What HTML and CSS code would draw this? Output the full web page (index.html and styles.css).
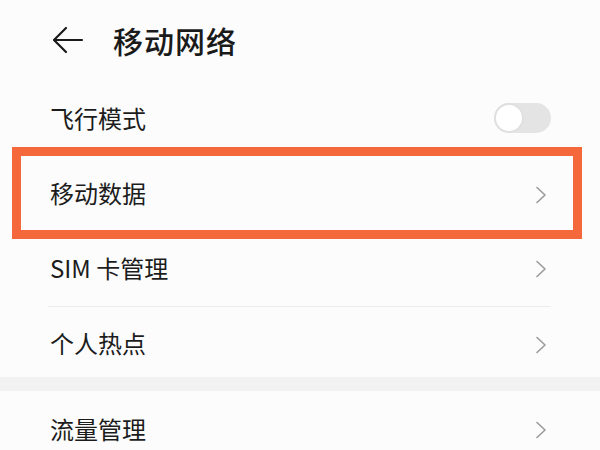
FILE: index.html
```html
<!DOCTYPE html>
<html lang="zh-CN">
<head>
<meta charset="utf-8">
<link rel="stylesheet" href="styles.css">
</head>
<body>
<div class="page">
  <header class="header">
    <svg class="back" width="32" height="28" viewBox="0 0 32 28">
      <path d="M30 14 H3 M14 2 L2 14 L14 26" fill="none" stroke="#1a1a1a" stroke-width="2.2" stroke-linecap="round" stroke-linejoin="round"/>
    </svg>
    <h1 class="title">移动网络</h1>
  </header>
  <section class="group">
    <div class="row">
      <span class="label">飞行模式</span>
      <span class="toggle"><span class="knob"></span></span>
    </div>
    <div class="row highlighted">
      <span class="label">移动数据</span>
      <svg class="chev" width="12" height="18" viewBox="0 0 12 18"><path d="M2 1.5 L10 9 L2 16.5" fill="none" stroke="#9a9a9a" stroke-width="1.6" stroke-linecap="round" stroke-linejoin="round"/></svg>
      <div class="mark"></div>
    </div>
    <div class="row sep">
      <span class="label">SIM 卡管理</span>
      <svg class="chev" width="12" height="18" viewBox="0 0 12 18"><path d="M2 1.5 L10 9 L2 16.5" fill="none" stroke="#9a9a9a" stroke-width="1.6" stroke-linecap="round" stroke-linejoin="round"/></svg>
    </div>
    <div class="row">
      <span class="label">个人热点</span>
      <svg class="chev" width="12" height="18" viewBox="0 0 12 18"><path d="M2 1.5 L10 9 L2 16.5" fill="none" stroke="#9a9a9a" stroke-width="1.6" stroke-linecap="round" stroke-linejoin="round"/></svg>
    </div>
  </section>
  <div class="band"></div>
  <section class="group">
    <div class="row">
      <span class="label">流量管理</span>
      <svg class="chev" width="12" height="18" viewBox="0 0 12 18"><path d="M2 1.5 L10 9 L2 16.5" fill="none" stroke="#9a9a9a" stroke-width="1.6" stroke-linecap="round" stroke-linejoin="round"/></svg>
    </div>
  </section>
</div>
</body>
</html>
```
FILE: styles.css
```css
* { box-sizing: border-box; }
html, body {
  margin: 0;
  padding: 0;
  background: #fcfcfc;
  overflow: hidden;
}
body {
  font-family: "Noto Sans CJK SC", "Noto Sans", sans-serif;
  color: #1a1a1a;
}
.page {
  width: 600px;
  height: 450px;
  overflow: hidden;
}
.header {
  height: 82px;
  display: flex;
  align-items: center;
  padding-left: 52px;
  padding-bottom: 2px;
}
.back {
  display: block;
  flex: none;
}
.title {
  margin: 0 0 0 29px;
  font-size: 30px;
  font-weight: 500;
  line-height: 1;
  letter-spacing: 1px;
  color: #1a1a1a;
}
.group {
  padding: 0 49px 0 48px;
}
.row {
  position: relative;
  height: 75px;
  display: flex;
  align-items: center;
  justify-content: space-between;
}
.row.sep {
  border-bottom: 1.5px solid #ececec;
}
.label {
  font-size: 24px;
  line-height: 1;
  padding-left: 2px;
  padding-bottom: 3px;
  color: #1c1c1c;
}
.chev {
  display: block;
  margin-right: 4px;
}
.toggle {
  position: relative;
  width: 57px;
  height: 30px;
  border-radius: 15px;
  background: #e4e4e4;
  margin-top: -3px;
}
.knob {
  position: absolute;
  left: 0;
  top: 0;
  width: 30px;
  height: 30px;
  border-radius: 50%;
  background: #ffffff;
  border: 2px solid #e0e0e0;
}
.mark {
  position: absolute;
  top: -10px;
  bottom: -7px;
  left: -36px;
  right: -31px;
  border: 9px solid #f4683b;
  pointer-events: none;
}
.band {
  height: 14px;
  background: #f2f2f2;
  margin-top: -5px;
}
.group + .band + .group .row {
  height: 78px;
}
```
